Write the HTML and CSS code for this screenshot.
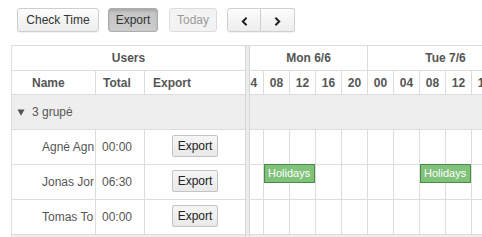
FILE: index.html
```html
<!DOCTYPE html>
<html>
<head>
<meta charset="utf-8">
<link rel="stylesheet" href="styles.css">
</head>
<body>
<div class="toolbar">
  <button class="btn btn-check">Check Time</button>
  <button class="btn btn-active">Export</button>
  <button class="btn btn-disabled">Today</button>
  <div class="btn-group">
    <button class="btn btn-nav"><svg width="7" height="9" viewBox="0 0 7 9"><polyline points="5.6,0.8 1.8,4.5 5.6,8.2" fill="none" stroke="#222" stroke-width="2"/></svg></button>
    <button class="btn btn-nav btn-nav-right"><svg width="7" height="9" viewBox="0 0 7 9"><polyline points="1.4,0.8 5.2,4.5 1.4,8.2" fill="none" stroke="#222" stroke-width="2"/></svg></button>
  </div>
</div>
<div class="scheduler">
  <div class="left">
    <div class="hdr-users">Users</div>
    <div class="hdr-cols">
      <div class="col-name hdr-name">Name</div>
      <div class="col-total hdr-total">Total</div>
      <div class="col-export hdr-export">Export</div>
    </div>
    <div class="group-row"><svg class="tri" width="8" height="7" viewBox="0 0 8 7"><polygon points="0.5,0.5 7.5,0.5 4,6.8" fill="#555"/></svg>3 grupė</div>
    <div class="res-row">
      <div class="col-name cell-name"><span class="clip">Agnė Agnė</span></div>
      <div class="col-total cell-total">00:00</div>
      <div class="col-export cell-export"><button class="row-btn">Export</button></div>
    </div>
    <div class="res-row">
      <div class="col-name cell-name"><span class="clip">Jonas Jonaitis</span></div>
      <div class="col-total cell-total">06:30</div>
      <div class="col-export cell-export"><button class="row-btn">Export</button></div>
    </div>
    <div class="res-row">
      <div class="col-name cell-name"><span class="clip">Tomas Tomaitis</span></div>
      <div class="col-total cell-total">00:00</div>
      <div class="col-export cell-export"><button class="row-btn">Export</button></div>
    </div>
  </div>
  <div class="splitter"></div>
  <div class="right">
    <div class="timeline">
      <div class="days">
        <div class="day day-first">Mon 6/6</div>
        <div class="day">Tue 7/6</div>
      </div>
      <div class="hours">
        <div class="hour">00</div><div class="hour">04</div><div class="hour">08</div><div class="hour">12</div><div class="hour">16</div><div class="hour">20</div>
        <div class="hour">00</div><div class="hour">04</div><div class="hour">08</div><div class="hour">12</div><div class="hour">16</div><div class="hour">20</div>
      </div>
      <div class="group-lane"></div>
      <div class="lane">
        <div class="slot"></div><div class="slot"></div><div class="slot"></div><div class="slot"></div><div class="slot"></div><div class="slot"></div>
        <div class="slot"></div><div class="slot"></div><div class="slot"></div><div class="slot"></div><div class="slot"></div><div class="slot"></div>
      </div>
      <div class="lane">
        <div class="slot"></div><div class="slot"></div><div class="slot"></div><div class="slot"></div><div class="slot"></div><div class="slot"></div>
        <div class="slot"></div><div class="slot"></div><div class="slot"></div><div class="slot"></div><div class="slot"></div><div class="slot"></div>
        <div class="event" style="left:52px">Holidays</div>
        <div class="event" style="left:208px">Holidays</div>
      </div>
      <div class="lane">
        <div class="slot"></div><div class="slot"></div><div class="slot"></div><div class="slot"></div><div class="slot"></div><div class="slot"></div>
        <div class="slot"></div><div class="slot"></div><div class="slot"></div><div class="slot"></div><div class="slot"></div><div class="slot"></div>
      </div>
    </div>
  </div>
</div>
</body>
</html>
```
FILE: styles.css
```css
html, body {
  margin: 0;
  padding: 0;
  overflow: hidden;
  background: #fff;
  font-family: "Liberation Sans", Arial, sans-serif;
  font-size: 12px;
  color: #555;
}

.toolbar {
  display: flex;
  align-items: flex-start;
  padding: 8px 0 0 17px;
  height: 24px;
}

.btn {
  box-sizing: border-box;
  height: 24px;
  margin: 0;
  padding: 0;
  font-family: "Liberation Sans", Arial, sans-serif;
  font-size: 12px;
  color: #333;
  border: 1px solid #cfcfcf;
  border-radius: 3px;
  background: linear-gradient(#fdfdfd, #ededed);
  box-shadow: 0 1px 1px rgba(0,0,0,0.06);
  display: flex;
  align-items: center;
  justify-content: center;
}

.btn-check { width: 82px; }
.btn-active {
  width: 50px;
  margin-left: 9px;
  background: linear-gradient(#c4c4c4, #cdcdcd);
  border-color: #adadad;
  box-shadow: inset 0 2px 3px rgba(0,0,0,0.15);
  color: #333;
}
.btn-disabled {
  width: 48px;
  margin-left: 11px;
  background: #f3f3f3;
  border-color: #dcdcdc;
  color: #9a9a9a;
  box-shadow: none;
}

.btn-group {
  display: flex;
  margin-left: 10px;
}
.btn-nav {
  width: 34px;
  padding-top: 3px;
  border-radius: 3px 0 0 3px;
}
.btn-nav-right {
  border-left: none;
  border-radius: 0 3px 3px 0;
}

.scheduler {
  display: flex;
  margin: 13px 0 0 11px;
  width: 471px;
  height: 192px;
  overflow: hidden;
  border-top: 1px solid #ddd;
  border-left: 1px solid #ddd;
  box-sizing: border-box;
  background: #eee;
}

.left {
  width: 233px;
  flex: none;
  background: #fff;
  align-self: flex-start;
}

.hdr-users {
  height: 24px;
  border-bottom: 1px solid #ddd;
  display: flex;
  align-items: center;
  justify-content: center;
  font-weight: bold;
  background: #fff;
}

.hdr-cols, .res-row {
  display: flex;
  border-bottom: 1px solid #ddd;
  background: #fff;
}
.hdr-cols { height: 23px; }
.res-row { height: 34px; }

.col-name {
  width: 83px;
  border-right: 1px solid #ddd;
  flex: none;
}
.col-total {
  width: 48px;
  border-right: 1px solid #ddd;
  flex: none;
}
.col-export {
  width: 100px;
  flex: none;
}

.hdr-name, .hdr-total, .hdr-export {
  display: flex;
  align-items: center;
  font-weight: bold;
}
.hdr-name { padding-left: 20px; width: 63px; }
.hdr-total { padding-left: 7px; width: 41px; }
.hdr-export { padding-left: 8px; width: 92px; }

.group-row {
  height: 34px;
  border-bottom: 1px solid #ddd;
  background: #eee;
  display: flex;
  align-items: center;
  padding-left: 5px;
}
.tri {
  margin-right: 7px;
  flex: none;
}

.cell-name {
  display: flex;
  align-items: center;
  padding-left: 30px;
  width: 53px;
}
.clip {
  display: block;
  width: 52px;
  overflow: hidden;
  white-space: nowrap;
}
.cell-total {
  display: flex;
  align-items: center;
  padding-left: 6px;
  width: 42px;
}
.cell-export {
  display: flex;
  justify-content: center;
  align-items: flex-start;
}

.row-btn {
  box-sizing: border-box;
  width: 46px;
  height: 22px;
  margin: 5px 0 0 0;
  padding: 0;
  font-family: "Liberation Sans", Arial, sans-serif;
  font-size: 12px;
  color: #222;
  border: 1px solid #c3c3c3;
  border-radius: 2px;
  background: linear-gradient(#f6f6f6, #e9e9e9);
}

.splitter {
  flex: none;
  width: 5px;
  box-sizing: border-box;
  border-left: 1px solid #d6d6d6;
  border-right: 1px solid #d6d6d6;
  background: #ececec;
}

.right {
  flex: 1;
  overflow: hidden;
  align-self: flex-start;
}

.timeline {
  width: 312px;
  margin-left: -38px;
  background: #fff;
}

.days, .hours, .lane {
  display: flex;
  border-bottom: 1px solid #ddd;
}
.days { height: 24px; }
.hours { height: 23px; }
.lane { height: 34px; position: relative; }

.day {
  box-sizing: border-box;
  width: 156px;
  flex: none;
  border-right: 1px solid #ddd;
  display: flex;
  align-items: center;
  justify-content: center;
  font-weight: bold;
}
.day-first { padding-left: 38px; }

.hour, .slot {
  box-sizing: border-box;
  width: 26px;
  flex: none;
  border-right: 1px solid #ddd;
}
.hour {
  display: flex;
  align-items: center;
  justify-content: center;
  font-weight: bold;
}

.group-lane {
  height: 34px;
  border-bottom: 1px solid #ddd;
  background: #eee;
}

.event {
  position: absolute;
  top: -1px;
  width: 51px;
  height: 19px;
  box-sizing: border-box;
  background: #80c27a;
  border: 1px solid #4b8c45;
  color: #fff;
  font-size: 11px;
  line-height: 17px;
  padding-left: 3px;
  white-space: nowrap;
  overflow: hidden;
}
```
